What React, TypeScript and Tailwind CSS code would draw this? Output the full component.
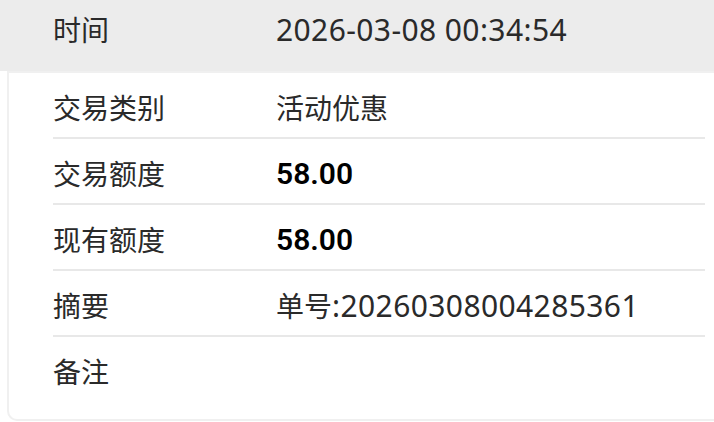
import React from 'react';

interface Row {
  label: string;
  value?: React.ReactNode;
}

const latin = "font-['Noto_Sans','Noto_Sans_CJK_SC',sans-serif]";

const rows: Row[] = [
  { label: '交易类别', value: <span className="text-[28px] text-[#2a2a2a]">活动优惠</span> },
  {
    label: '交易额度',
    value: <span className="font-['Roboto','Noto_Sans_CJK_SC',sans-serif] text-[30px] font-semibold text-black">58.00</span>,
  },
  {
    label: '现有额度',
    value: <span className="font-['Roboto','Noto_Sans_CJK_SC',sans-serif] text-[30px] font-semibold text-black">58.00</span>,
  },
  {
    label: '摘要',
    value: (
      <span className="text-[#2a2a2a]">
        <span className="text-[28px]">单号</span>
        <span className="text-[30px] tracking-[0.4px]">:20260308004285361</span>
      </span>
    ),
  },
  { label: '备注' },
];

const App: React.FC = () => {
  return (
    <div className={`w-[714px] h-[422px] bg-white overflow-hidden ${latin}`}>
      {/* Header */}
      <div className="h-[71px] bg-[#ececec] flex items-center pl-[53px] pb-[12px]">
        <div className="w-[223px] text-[28px] text-[#2a2a2a]">时间</div>
        <div className="text-[30px] tracking-[0.4px] text-[#2a2a2a]">2026-03-08 00:34:54</div>
      </div>

      {/* Detail card */}
      <div className="ml-[7px] h-[350px] border-2 border-r-0 border-[#f0f0f0] rounded-bl-[10px] pl-[44px] pr-[9px]">
        {rows.map((row, i) => (
          <div
            key={row.label}
            className={`flex items-center pt-[5px] ${
              i < rows.length - 1 ? 'h-[66px] border-b-2 border-[#e8e8e8]' : 'h-[64px]'
            }`}
          >
            <div className="w-[223px] text-[28px] text-[#2a2a2a]">{row.label}</div>
            <div className="leading-none">{row.value}</div>
          </div>
        ))}
      </div>
    </div>
  );
};

export default App;
